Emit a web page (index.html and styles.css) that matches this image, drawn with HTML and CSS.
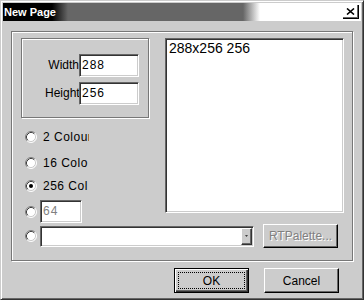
FILE: index.html
```html
<!DOCTYPE html>
<html>
<head>
<meta charset="utf-8">
<link rel="stylesheet" href="styles.css">
</head>
<body>
<div class="win">
  <div class="title">
    <span class="tt">New Page</span>
    <span class="close"><svg width="9" height="7" viewBox="0 0 9 7"><path d="M1 0.5 L8 6.5 M8 0.5 L1 6.5" stroke="#000" stroke-width="1.6" fill="none"/></svg></span>
  </div>
  <div class="body">
    <div class="frame">
      <div class="top">
        <div class="left">
          <div class="dims">
            <div class="frow"><span class="lbl">Width</span><span class="tb">288</span></div>
            <div class="frow"><span class="lbl">Height</span><span class="tb">256</span></div>
          </div>
          <div class="radio r1">
            <svg class="rb" width="12" height="12" viewBox="0 0 12 12"><circle cx="6" cy="6" r="5" fill="#fff"/><path d="M2.11 9.89 A5.5 5.5 0 0 1 9.89 2.11" stroke="#808080" fill="none"/><path d="M9.89 2.11 A5.5 5.5 0 0 1 2.11 9.89" stroke="#fff" fill="none"/><path d="M2.82 9.18 A4.5 4.5 0 0 1 9.18 2.82" stroke="#404040" fill="none"/><path d="M9.18 2.82 A4.5 4.5 0 0 1 2.82 9.18" stroke="#ccc" fill="none"/></svg>
            <span class="rl">2 Colour</span>
          </div>
          <div class="radio r2">
            <svg class="rb" width="12" height="12" viewBox="0 0 12 12"><circle cx="6" cy="6" r="5" fill="#fff"/><path d="M2.11 9.89 A5.5 5.5 0 0 1 9.89 2.11" stroke="#808080" fill="none"/><path d="M9.89 2.11 A5.5 5.5 0 0 1 2.11 9.89" stroke="#fff" fill="none"/><path d="M2.82 9.18 A4.5 4.5 0 0 1 9.18 2.82" stroke="#404040" fill="none"/><path d="M9.18 2.82 A4.5 4.5 0 0 1 2.82 9.18" stroke="#ccc" fill="none"/></svg>
            <span class="rl">16 Colo</span>
          </div>
          <div class="radio r3">
            <svg class="rb" width="12" height="12" viewBox="0 0 12 12"><circle cx="6" cy="6" r="5" fill="#fff"/><path d="M2.11 9.89 A5.5 5.5 0 0 1 9.89 2.11" stroke="#808080" fill="none"/><path d="M9.89 2.11 A5.5 5.5 0 0 1 2.11 9.89" stroke="#fff" fill="none"/><path d="M2.82 9.18 A4.5 4.5 0 0 1 9.18 2.82" stroke="#404040" fill="none"/><path d="M9.18 2.82 A4.5 4.5 0 0 1 2.82 9.18" stroke="#ccc" fill="none"/><circle cx="6" cy="6" r="2" fill="#000"/></svg>
            <span class="rl">256 Col</span>
          </div>
          <div class="radio r4">
            <svg class="rb" width="12" height="12" viewBox="0 0 12 12"><circle cx="6" cy="6" r="5" fill="#fff"/><path d="M2.11 9.89 A5.5 5.5 0 0 1 9.89 2.11" stroke="#808080" fill="none"/><path d="M9.89 2.11 A5.5 5.5 0 0 1 2.11 9.89" stroke="#fff" fill="none"/><path d="M2.82 9.18 A4.5 4.5 0 0 1 9.18 2.82" stroke="#404040" fill="none"/><path d="M9.18 2.82 A4.5 4.5 0 0 1 2.82 9.18" stroke="#ccc" fill="none"/></svg>
            <span class="tb small dis">64</span>
          </div>
        </div>
        <div class="preview">288x256 256</div>
      </div>
      <div class="crow">
        <svg class="rb" width="12" height="12" viewBox="0 0 12 12"><circle cx="6" cy="6" r="5" fill="#fff"/><path d="M2.11 9.89 A5.5 5.5 0 0 1 9.89 2.11" stroke="#808080" fill="none"/><path d="M9.89 2.11 A5.5 5.5 0 0 1 2.11 9.89" stroke="#fff" fill="none"/><path d="M2.82 9.18 A4.5 4.5 0 0 1 9.18 2.82" stroke="#404040" fill="none"/><path d="M9.18 2.82 A4.5 4.5 0 0 1 2.82 9.18" stroke="#ccc" fill="none"/></svg>
        <div class="combo">
          <span class="cfield"></span>
          <span class="cbtn"><svg width="3" height="2" viewBox="0 0 3 2"><path d="M0 0 H3 L1.5 2 Z" fill="#404040"/></svg></span>
        </div>
        <button class="btn pal" disabled>RTPalette...</button>
      </div>
    </div>
    <div class="buttons">
      <button class="btn def">OK</button>
      <button class="btn">Cancel</button>
    </div>
  </div>
</div>
</body>
</html>
```
FILE: styles.css
```css
* { box-sizing: border-box; }
html, body { margin: 0; padding: 0; background: #ccc; }
body { font-family: "Liberation Sans", Arial, sans-serif; font-size: 12px; color: #000; }

.win {
  width: 364px; height: 300px;
  border: 1px solid; border-color: #ccc #333 #333 #ccc;
  box-shadow: inset 1px 1px #fff, inset -1px -1px #666;
  padding: 2px; background: #ccc;
  display: flex; flex-direction: column;
}
.title {
  height: 18px; display: flex; align-items: center; flex-shrink: 0;
  background: linear-gradient(to right, #000 49px, #666 65px, #666 240px, #fff 257px);
}
.tt { color: #fff; font-weight: bold; font-size: 11px; padding-left: 1px; line-height: 18px; }
.close {
  margin-left: auto; margin-right: 2px; width: 16px; height: 14px;
  background: #fff; border-right: 1px solid #000; border-bottom: 1px solid #000;
  box-shadow: inset -1px -1px #666;
  display: flex; align-items: center; justify-content: center;
}
.close svg { display: block; margin: 0 1px 1px 0; }

.body { padding: 10px 8px 0 8px; }
.frame {
  height: 230px; border: 1px solid #777;
  box-shadow: inset 1px 1px #fff, 1px 1px #fff;
  padding: 6px 8px 0 9px;
}
.top { display: flex; gap: 16px; }
.left { width: 128px; display: flex; flex-direction: column; }
.dims {
  height: 80px; border: 1px solid #777;
  box-shadow: inset 1px 1px #fff, 1px 1px #fff;
  padding: 15px 0 0 23px;
  display: flex; flex-direction: column; gap: 5px;
}
.frow { display: flex; height: 23px; }
.lbl { width: 34px; text-align: right; white-space: nowrap; overflow: hidden; line-height: 23px; }
.tb {
  display: block; width: 60px; height: 23px; background: #fff;
  border: 1px solid; border-color: #666 #fff #fff #666;
  box-shadow: inset 1px 1px #333, inset -1px -1px #ccc;
  padding-left: 2px; line-height: 21px; letter-spacing: 1px;
}
.tb.small { width: 42px; margin-left: 3px; }
.tb.dis { color: #808080; }

.radio { display: flex; align-items: center; height: 16px; padding-left: 4px; }
.rb { display: block; flex-shrink: 0; }
.r1 { margin-top: 11px; }
.r2 { margin-top: 10px; }
.r3 { margin-top: 7px; }
.r4 { margin-top: 6px; height: 23px; }
.rl { margin-left: 6px; width: 46px; white-space: nowrap; overflow: hidden; line-height: 16px; letter-spacing: 0.5px; }

.preview {
  width: 179px; height: 175px; background: #fff;
  border: 1px solid; border-color: #666 #fff #fff #666;
  box-shadow: inset 1px 1px #333, inset -1px -1px #ccc;
  padding: 1px 0 0 3px; font-size: 14px; line-height: 16px;
}

.crow { display: flex; align-items: center; height: 24px; margin-top: 1px; padding-left: 4px; }
.combo {
  display: flex; width: 214px; height: 21px; margin-left: 3px; background: #fff;
  border: 1px solid; border-color: #666 #fff #fff #666;
  box-shadow: inset 1px 1px #333, inset -1px -1px #ccc;
  padding: 1px;
}
.cfield { flex: 1; }
.cbtn {
  width: 11px; background: #ccc;
  border: 1px solid; border-color: #fff #333 #333 #fff;
  box-shadow: inset -1px -1px #666;
  display: flex; align-items: center; justify-content: center;
}
.cbtn svg { display: block; }

.btn {
  font-family: "Liberation Sans", Arial, sans-serif; font-size: 12px; color: #000;
  width: 75px; height: 25px; padding: 0; background: #ccc;
  border: 1px solid; border-color: #fff #000 #000 #fff;
  box-shadow: inset -1px -1px #666;
}
.btn.pal { margin-left: 9px; height: 24px; color: #808080; text-shadow: 1px 1px #fff; }
.btn.def {
  border: 1px solid #000;
  box-shadow: inset 1px 1px #fff, inset -1px -1px #333, inset -2px -2px #666;
  outline: 1px dotted #000; outline-offset: -5px;
}
.buttons { display: flex; justify-content: flex-end; gap: 15px; margin-top: 7px; padding-right: 14px; }
```
